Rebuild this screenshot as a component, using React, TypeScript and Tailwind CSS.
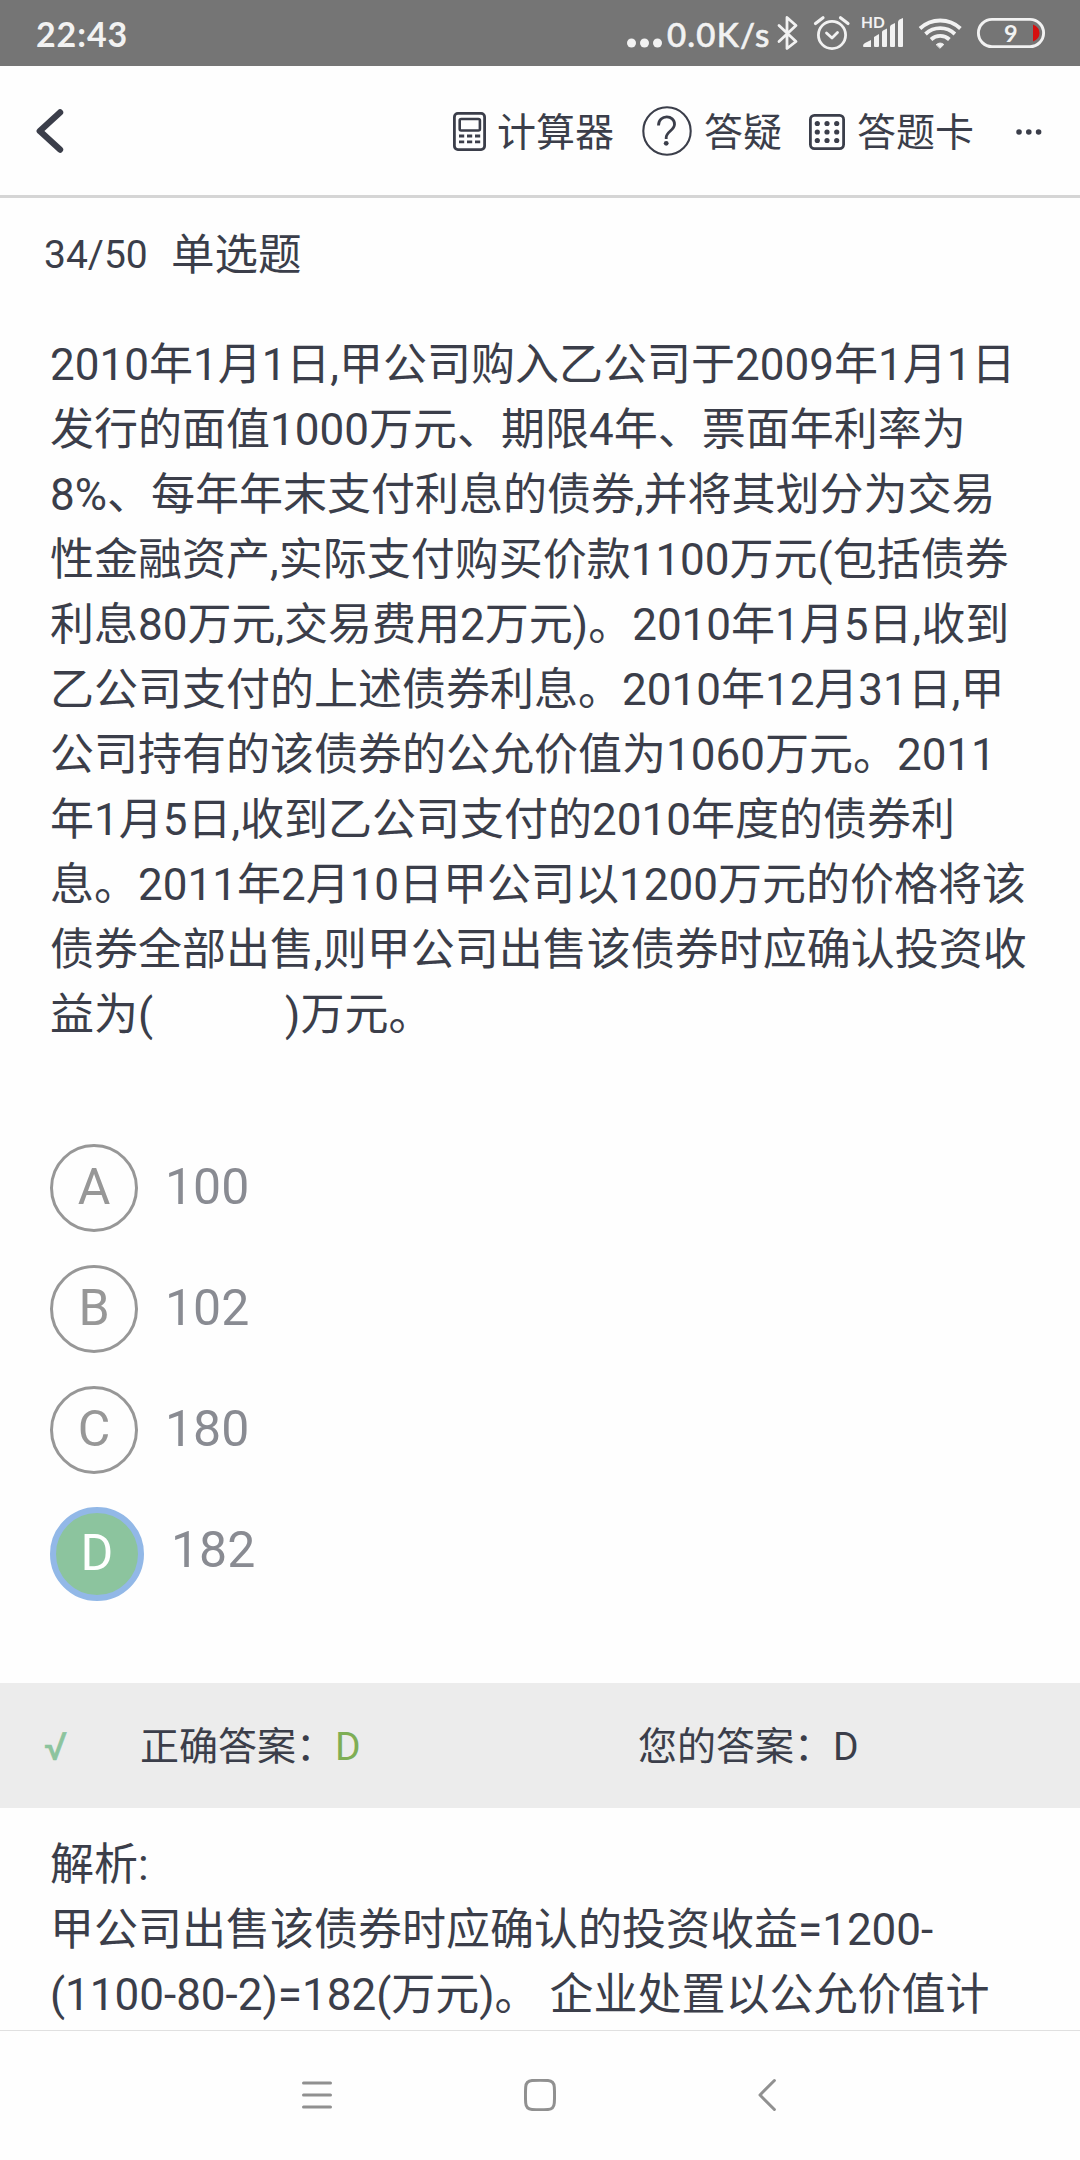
import React from "react";

const questionLines = [
  "2010年1月1日,甲公司购入乙公司于2009年1月1日",
  "发行的面值1000万元、期限4年、票面年利率为",
  "8%、每年年末支付利息的债券,并将其划分为交易",
  "性金融资产,实际支付购买价款1100万元(包括债券",
  "利息80万元,交易费用2万元)。2010年1月5日,收到",
  "乙公司支付的上述债券利息。2010年12月31日,甲",
  "公司持有的该债券的公允价值为1060万元。2011",
  "年1月5日,收到乙公司支付的2010年度的债券利",
  "息。2011年2月10日甲公司以1200万元的价格将该",
  "债券全部出售,则甲公司出售该债券时应确认投资收",
  "益为(\u3000\u3000\u3000)万元。",
];

const explanationLines = [
  "解析:",
  "甲公司出售该债券时应确认的投资收益=1200-",
  "(1100-80-2)=182(万元)。 企业处置以公允价值计",
];

const options = [
  { key: "A", value: "100" },
  { key: "B", value: "102" },
  { key: "C", value: "180" },
  { key: "D", value: "182", selected: true },
];

function StatusBar() {
  return (
    <div className="flex h-[66px] shrink-0 items-center bg-[#757575] pl-[36px] font-['Lato',sans-serif] text-[#f2f2f2]">
      <span className="w-[591px] pt-[1px] text-[34px] leading-[66px] font-bold tracking-[0.9px]">22:43</span>
      <svg className="mt-[19px] h-[10px] w-[36px]" viewBox="0 0 36 10" fill="currentColor">
        <circle cx="4.5" cy="5" r="4.5" />
        <circle cx="17.5" cy="5" r="4.5" />
        <circle cx="30.5" cy="5" r="4.5" />
      </svg>
      <span className="ml-[4px] w-[109px] pt-[1px] text-[33px] leading-[66px] font-medium tracking-[1.2px] whitespace-nowrap [-webkit-text-stroke:0.6px_currentColor]">0.0K/s</span>
      <svg className="h-[66px] w-[304px]" viewBox="776 0 304 66" fill="none" stroke="currentColor" strokeWidth="2.8" strokeLinecap="round" strokeLinejoin="round">
        <path d="M779 25.5 L796 41.5 L787 48.5 V17.5 L796 25.5 L779 41.5" />
        <circle cx="832" cy="35" r="13.6" />
        <path d="M815.5 23.5 L823 17.8 M848 23.5 L840.5 17.8" strokeWidth="3.2" />
        <path d="M826.5 33 L832 38 L837.5 32.5" />
        <g fill="currentColor" stroke="none">
          <path d="M863 46 Q863 44 865 43 L871 40 V47 H864 Q863 47 863 46Z" />
          <path d="M874 37 L879 34 V46 Q879 47 878 47 H875 Q874 47 874 46Z" />
          <path d="M882 32 Q882 31 883 30.5 L887 28.5 V46 Q887 47 886 47 H883 Q882 47 882 46Z" />
          <path d="M890 27 Q890 26 891 25 L895 23 V46 Q895 47 894 47 H891 Q890 47 890 46Z" />
          <path d="M898 22 Q898 20.5 899.5 19.5 L903 18 V46 Q903 47 902 47 H899 Q898 47 898 46Z" />
          <text x="861" y="28" fontSize="15.5" fontWeight="700" fontFamily="Lato">HD</text>
          <path d="M936.5 44.5 Q940 41.5 943.8 44.5 L940.2 48Z" strokeWidth="1" stroke="currentColor" />
        </g>
        <g strokeWidth="3.8" strokeLinecap="butt">
          <path d="M920 28.5 A29.5 29.5 0 0 1 960.4 28.5" />
          <path d="M925.5 34 A21.5 21.5 0 0 1 954.9 34" />
          <path d="M931 39.5 A13.5 13.5 0 0 1 949.4 39.5" />
        </g>
        <rect x="978.4" y="19.4" width="65.2" height="27.2" rx="13.6" strokeWidth="2.9" />
        <path d="M1033 24.5 Q1039.5 27 1039.5 33 Q1039.5 39 1033 41.5Z" fill="#d50f0f" stroke="none" />
        <text x="1004" y="41.5" fontSize="23.5" fontWeight="700" fontFamily="Lato" fill="currentColor" stroke="none">9</text>
      </svg>
    </div>
  );
}

function Header() {
  return (
    <header className="flex h-[132px] shrink-0 items-center border-b-[3px] border-[#d5d5d5] text-[39px] leading-[60px] whitespace-nowrap">
      <svg className="mt-[1px] ml-[36px] h-[46px] w-[28px]" viewBox="0 0 28 46" fill="none" stroke="currentColor" strokeWidth="6.4" strokeLinecap="round" strokeLinejoin="round">
        <path d="M24 4.5 L3.8 23 L24 41.5" />
      </svg>
      <svg className="mt-[1px] ml-[389px] h-[39px] w-[33px]" viewBox="0 0 33 39" fill="none" stroke="currentColor">
        <rect x="1.4" y="1.4" width="30.2" height="36.2" rx="3.5" strokeWidth="2.8" />
        <rect x="6.7" y="7" width="20.2" height="11.5" rx="1.5" strokeWidth="2.6" />
        <path d="M6 24 h5.2 M14 24 h5.2 M22 24 h5.2 M6 29.8 h5.2 M14 29.8 h5.2 M22 29.8 h5.2" strokeWidth="2.8" />
      </svg>
      <span className="ml-[11px] w-[145px] pt-[5px]">计算器</span>
      <svg className="mt-[1px] h-[50px] w-[50px]" viewBox="0 0 50 50" fill="none" stroke="currentColor" strokeWidth="2.1">
        <circle cx="25" cy="25" r="23.7" />
        <path d="M16.5 19.5 C16.5 8 33 8.5 32.5 18.5 C32.2 24.5 24.2 25.5 24.2 31.5 V33" strokeWidth="2.8" />
        <circle cx="24.2" cy="37.3" r="2.4" fill="currentColor" stroke="none" />
      </svg>
      <span className="ml-[12px] w-[105px] pt-[5px]">答疑</span>
      <svg className="mt-[2px] h-[36px] w-[36px]" viewBox="0 0 36 36" fill="currentColor">
        <rect x="1.4" y="1.4" width="33.2" height="33.2" rx="4" fill="none" stroke="currentColor" strokeWidth="2.8" />
        {[9.5, 18, 26.5].map((y) => [8.3, 18, 27.7].map((x) => <circle key={`${x}-${y}`} cx={x} cy={y} r="2.6" />))}
      </svg>
      <span className="ml-[12px] w-[159px] pt-[5px]">答题卡</span>
      <svg className="mt-[2px] h-[8px] w-[26px]" viewBox="0 0 26 8" fill="currentColor">
        <circle cx="3" cy="4" r="2.8" />
        <circle cx="12.8" cy="4" r="2.8" />
        <circle cx="22.6" cy="4" r="2.8" />
      </svg>
    </header>
  );
}

function Option({ label, value, selected }: { label: string; value: string; selected?: boolean }) {
  return (
    <div className="flex h-[121px] items-start text-[50px]">
      {selected ? (
        <div className="flex h-[94px] w-[94px] items-center justify-center rounded-full border-[6px] border-[#92b8e7] bg-[#8cc49e] pb-[1px] text-white">{label}</div>
      ) : (
        <div className="flex h-[88px] w-[88px] items-center justify-center rounded-full border-[3px] border-[#979797] pb-[1px] text-[#979797]">{label}</div>
      )}
      <span className="ml-[27px] leading-[86px] text-[#898b92]">{value}</span>
    </div>
  );
}

export default function App() {
  return (
    <div className="flex h-[2160px] w-[1080px] flex-col overflow-hidden bg-[#fefefe] font-['Roboto','Noto_Sans_CJK_SC',sans-serif] text-[#3b3e4a]">
      <StatusBar />
      <Header />
      <main className="flex h-[1832px] shrink-0 flex-col overflow-hidden">
        <div className="flex h-[113px] shrink-0 items-start pt-[25px] pl-[44px]">
          <span className="w-[127px] text-[39px] leading-[65px]">34/50</span>
          <span className="text-[43.5px] leading-[65px]">单选题</span>
        </div>
        <div className="h-[833px] shrink-0 pt-[22px] pl-[50px] text-[44px] leading-[65px] whitespace-pre">
          {questionLines.map((line) => (
            <p key={line}>{line}</p>
          ))}
        </div>
        <div className="flex h-[539px] shrink-0 flex-col pl-[50px]">
          {options.map((o) => (
            <Option key={o.key} label={o.key} value={o.value} selected={o.selected} />
          ))}
        </div>
        <div className="flex h-[125px] shrink-0 items-center bg-[#ececec] pt-[3px] pl-[44px] text-[39px] leading-[60px] whitespace-nowrap">
          <span className="w-[96px] text-[#8cc49e] [-webkit-text-stroke:0.6px_currentColor]">√</span>
          <span className="w-[195px]">正确答案：</span>
          <span className="w-[303px] text-[#7eae55]">D</span>
          <span className="w-[195px]">您的答案：</span>
          <span>D</span>
        </div>
        <div className="pt-[25px] pl-[50px] text-[44px] leading-[65px] whitespace-pre">
          {explanationLines.map((line) => (
            <p key={line}>{line}</p>
          ))}
        </div>
      </main>
      <nav className="flex h-[130px] shrink-0 items-center border-t border-[#e0e0e0] pb-[2px] text-[#909090]">
        <svg className="ml-[302px] h-[34px] w-[30px]" viewBox="0 0 30 34" fill="none" stroke="currentColor" strokeWidth="3" strokeLinecap="round">
          <path d="M1.5 5 H28.5 M1.5 17 H28.5 M1.5 29 H28.5" />
        </svg>
        <svg className="ml-[192px] h-[32px] w-[32px]" viewBox="0 0 32 32" fill="none" stroke="currentColor" strokeWidth="3">
          <path d="M8 1.5 Q16 1 24 1.5 Q30 2 30.3 8 Q30.8 16 30.3 24 Q30 30 24 30.5 Q16 31 8 30.5 Q2 30 1.7 24 Q1.2 16 1.7 8 Q2 2 8 1.5Z" />
        </svg>
        <svg className="ml-[202px] h-[34px] w-[19px]" viewBox="0 0 19 34" fill="none" stroke="currentColor" strokeWidth="3" strokeLinecap="round" strokeLinejoin="round">
          <path d="M16.4 2.5 L2 17 L16.4 31.5" />
        </svg>
      </nav>
    </div>
  );
}
